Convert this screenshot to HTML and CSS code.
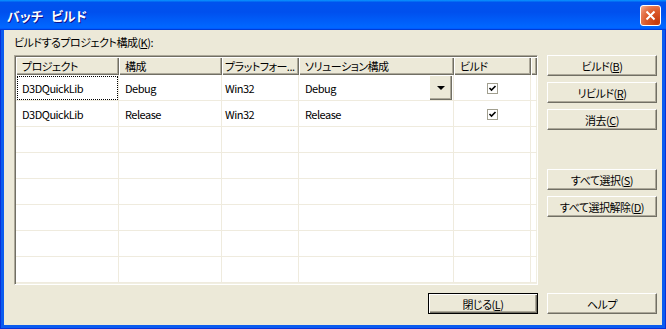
FILE: index.html
```html
<!DOCTYPE html>
<html lang="ja">
<head>
    <meta charset="UTF-8">
    <title>バッチ ビルド</title>
    <link rel="stylesheet" href="styles.css">
</head>
<body>
    <div class="window">
        <div class="titlebar">
            <span class="title">バッチ ビルド</span>
            <button class="close" aria-label="閉じる">
                <svg width="13" height="13" viewBox="0 0 13 13">
                    <path d="M2.5 2.5 L10.5 10.5 M10.5 2.5 L2.5 10.5" stroke="#fff" stroke-width="2" fill="none"/>
                </svg>
            </button>
        </div>

        <div class="frame">
            <div class="client">
                <div class="label">ビルドするプロジェクト構成(<u>K</u>):</div>

                <div class="content">
                    <div class="list">
                        <div class="row head">
                            <div class="cell">プロジェクト</div>
                            <div class="cell">構成</div>
                            <div class="cell narrow">プラットフォー...</div>
                            <div class="cell">ソリューション構成</div>
                            <div class="cell">ビルド</div>
                            <div class="cell"></div>
                        </div>
                        <div class="row">
                            <div class="cell focus">D3DQuickLib</div>
                            <div class="cell">Debug</div>
                            <div class="cell narrow">Win32</div>
                            <div class="cell">Debug<span class="dd"><span class="arrow"></span></span></div>
                            <div class="cell center"><span class="chk"><svg width="9" height="9" viewBox="0 0 9 9"><polyline points="1.5,4 3.5,6 7.5,2" stroke="#000" stroke-width="1.6" fill="none"/></svg></span></div>
                            <div class="cell"></div>
                        </div>
                        <div class="row">
                            <div class="cell">D3DQuickLib</div>
                            <div class="cell">Release</div>
                            <div class="cell narrow">Win32</div>
                            <div class="cell">Release</div>
                            <div class="cell center"><span class="chk"><svg width="9" height="9" viewBox="0 0 9 9"><polyline points="1.5,4 3.5,6 7.5,2" stroke="#000" stroke-width="1.6" fill="none"/></svg></span></div>
                            <div class="cell"></div>
                        </div>
                        <div class="row"><div class="cell"></div><div class="cell"></div><div class="cell"></div><div class="cell"></div><div class="cell"></div><div class="cell"></div></div>
                        <div class="row"><div class="cell"></div><div class="cell"></div><div class="cell"></div><div class="cell"></div><div class="cell"></div><div class="cell"></div></div>
                        <div class="row"><div class="cell"></div><div class="cell"></div><div class="cell"></div><div class="cell"></div><div class="cell"></div><div class="cell"></div></div>
                        <div class="row"><div class="cell"></div><div class="cell"></div><div class="cell"></div><div class="cell"></div><div class="cell"></div><div class="cell"></div></div>
                        <div class="row"><div class="cell"></div><div class="cell"></div><div class="cell"></div><div class="cell"></div><div class="cell"></div><div class="cell"></div></div>
                        <div class="row"><div class="cell"></div><div class="cell"></div><div class="cell"></div><div class="cell"></div><div class="cell"></div><div class="cell"></div></div>
                    </div>

                    <div class="side">
                        <button class="btn">ビルド(<u>B</u>)</button>
                        <button class="btn">リビルド(<u>R</u>)</button>
                        <button class="btn">消去(<u>C</u>)</button>
                        <button class="btn sep">すべて選択(<u>S</u>)</button>
                        <button class="btn">すべて選択解除(<u>D</u>)</button>
                    </div>
                </div>

                <div class="footer">
                    <button class="btn default">閉じる(<u>L</u>)</button>
                    <button class="btn">ヘルプ</button>
                </div>
            </div>
        </div>
    </div>
</body>
</html>
```

FILE: styles.css
```css
* {
    box-sizing: border-box;
}

body {
    margin: 0;
    font-family: "Noto Sans CJK JP", sans-serif;
    font-size: 11px;
    font-feature-settings: "palt";
    letter-spacing: -0.5px;
    color: #000;
    background-color: #ece9d8;
}

.window {
    width: 666px;
    height: 329px;
    display: flex;
    flex-direction: column;
}

/* barra de titulo estilo XP */
.titlebar {
    flex: none;
    height: 30px;
    display: flex;
    align-items: center;
    justify-content: space-between;
    padding: 0 5px 0 7px;
    background: linear-gradient(180deg, #0997ff, #0053ee 8%, #0050ee 40%, #0066ff 88%, #0066ff 93%, #005bff 95%, #003dd7 96%, #003dd7);
}

.title {
    color: #fff;
    font-weight: bold;
    font-size: 13px;
    letter-spacing: 0;
    word-spacing: 5px;
    text-shadow: 1px 1px #0f1089;
}

.close {
    width: 21px;
    height: 21px;
    padding: 0;
    border: 1px solid #fff;
    border-radius: 3px;
    display: flex;
    align-items: center;
    justify-content: center;
    background: radial-gradient(circle at 85% 85%, #c53a0c 0, #dc5a2a 50%, #e77c55 75%, #f6b59a 100%);
}

.frame {
    flex: 1;
    display: flex;
    background-color: #0831d9;
    padding: 0 1px 1px;
}

.client {
    flex: 1;
    background-color: #ece9d8;
    border: 3px solid #0b5cef;
    border-top: 0;
    padding: 5px 5px 0 10px;
}

.label {
    height: 15px;
    line-height: 15px;
}

.content {
    display: flex;
    gap: 9px;
    margin-top: 5px;
}

/* lista de projetos */
.list {
    width: 524px;
    height: 230px;
    padding: 1px;
    background-color: #fff;
    border: 1px solid;
    border-color: #aca899 #fff #fff #aca899;
    box-shadow: inset 1px 1px #716f64, inset -1px -1px #f1efe2;
    overflow: hidden;
}

.row {
    display: grid;
    grid-template-columns: 103px 103px 77px 155px 77px 1fr;
    height: 26px;
}

.cell {
    display: flex;
    align-items: center;
    padding-left: 6px;
    white-space: nowrap;
    overflow: hidden;
    border-right: 1px solid #efebde;
    border-bottom: 1px solid #efebde;
}

.cell.narrow {
    padding-left: 3px;
}

.cell.center {
    justify-content: center;
    padding-left: 0;
}

.cell.focus {
    outline: 1px dotted #000;
    outline-offset: -2px;
}

.head {
    height: 18px;
}

.head .cell {
    border: 0;
    background-color: #ece9d8;
    box-shadow: inset 1px 1px #fff, inset -1px -1px #716f64, inset -2px -2px #aca899;
}

.dd {
    margin-left: auto;
    margin-right: 1px;
    width: 23px;
    height: 100%;
    display: flex;
    align-items: center;
    justify-content: center;
    background-color: #ece9d8;
    box-shadow: inset 1px 1px #fff, inset -1px -1px #716f64, inset -2px -2px #aca899;
}

.arrow {
    width: 0;
    height: 0;
    border-left: 4px solid transparent;
    border-right: 4px solid transparent;
    border-top: 4px solid #000;
}

.chk {
    width: 11px;
    height: 11px;
    margin-top: 1px;
    border: 1px solid #a19f8f;
    background-color: #fff;
    display: flex;
}

/* botoes */
.side {
    width: 110px;
    display: flex;
    flex-direction: column;
    gap: 6px;
}

.btn {
    width: 110px;
    height: 21px;
    padding: 0;
    font: inherit;
    font-feature-settings: "palt";
    letter-spacing: -0.5px;
    color: #000;
    background-color: #ece9d8;
    border: 1px solid;
    border-color: #fff #716f64 #716f64 #fff;
    box-shadow: inset -1px -1px #aca899;
}

.btn.sep {
    margin-top: 33px;
}

.btn.default {
    border: 1px solid #000;
    box-shadow: inset 1px 1px #fff, inset -1px -1px #716f64, inset -2px -2px #aca899;
}

.footer {
    display: flex;
    justify-content: flex-end;
    gap: 9px;
    margin-top: 8px;
}
```
